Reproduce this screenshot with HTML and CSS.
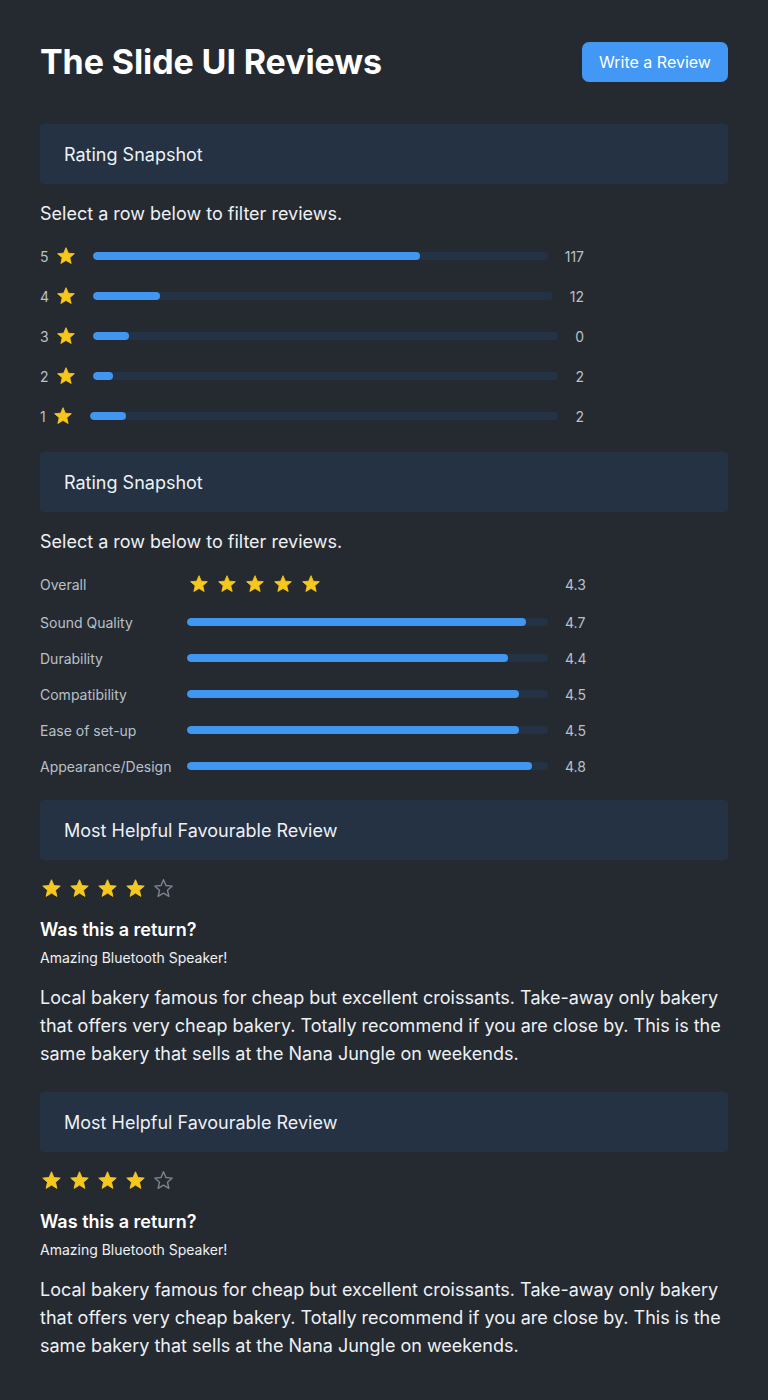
FILE: index.html
```html
<!DOCTYPE html>
<html lang="en">
<head>
<meta charset="utf-8">
<title>The Slide UI Reviews</title>
<link rel="stylesheet" href="styles.css">
</head>
<body>
<svg width="0" height="0" class="defs" aria-hidden="true">
  <defs>
    <symbol id="star" viewBox="0 0 24 24"><path d="M12 17.27L18.18 21l-1.64-7.03L22 9.24l-7.19-.61L12 2 9.19 8.63 2 9.24l5.46 4.730L5.82 21z" stroke-linejoin="round"/></symbol>
  </defs>
</svg>
<main class="page">
  <header class="header">
    <h1 class="title">The Slide UI Reviews</h1>
    <button class="btn">Write a Review</button>
  </header>

  <section class="section">
    <div class="panel">Rating Snapshot</div>
    <p class="intro">Select a row below to filter reviews.</p>
    <div class="dist">
      <div class="drow"><span class="dnum">5</span><svg class="dstar"><use href="#star"/></svg><div class="track"><div class="fill" style="width:72%"></div></div><span class="dcount">117</span></div>
      <div class="drow"><span class="dnum">4</span><svg class="dstar"><use href="#star"/></svg><div class="track"><div class="fill" style="width:14.5%"></div></div><span class="dcount">12</span></div>
      <div class="drow"><span class="dnum">3</span><svg class="dstar"><use href="#star"/></svg><div class="track"><div class="fill" style="width:7.8%"></div></div><span class="dcount">0</span></div>
      <div class="drow"><span class="dnum">2</span><svg class="dstar"><use href="#star"/></svg><div class="track"><div class="fill" style="width:4.4%"></div></div><span class="dcount">2</span></div>
      <div class="drow"><span class="dnum">1</span><svg class="dstar"><use href="#star"/></svg><div class="track"><div class="fill" style="width:7.7%"></div></div><span class="dcount">2</span></div>
    </div>
  </section>

  <section class="section">
    <div class="panel">Rating Snapshot</div>
    <p class="intro">Select a row below to filter reviews.</p>
    <div class="attrs">
      <div class="arow arow-overall"><span class="alabel">Overall</span><div class="astars"><svg class="sstar"><use href="#star"/></svg><svg class="sstar"><use href="#star"/></svg><svg class="sstar"><use href="#star"/></svg><svg class="sstar"><use href="#star"/></svg><svg class="sstar"><use href="#star"/></svg></div><span class="aval">4.3</span></div>
      <div class="arow"><span class="alabel">Sound Quality</span><div class="track"><div class="fill" style="width:94%"></div></div><span class="aval">4.7</span></div>
      <div class="arow"><span class="alabel">Durability</span><div class="track"><div class="fill" style="width:89%"></div></div><span class="aval">4.4</span></div>
      <div class="arow"><span class="alabel">Compatibility</span><div class="track"><div class="fill" style="width:92%"></div></div><span class="aval">4.5</span></div>
      <div class="arow"><span class="alabel">Ease of set-up</span><div class="track"><div class="fill" style="width:92%"></div></div><span class="aval">4.5</span></div>
      <div class="arow"><span class="alabel">Appearance/Design</span><div class="track"><div class="fill" style="width:95.5%"></div></div><span class="aval">4.8</span></div>
    </div>
  </section>

  <section class="section review">
    <div class="panel">Most Helpful Favourable Review</div>
    <div class="rstars"><svg class="rstar"><use href="#star"/></svg><svg class="rstar"><use href="#star"/></svg><svg class="rstar"><use href="#star"/></svg><svg class="rstar"><use href="#star"/></svg><svg class="rstar empty"><use href="#star"/></svg></div>
    <h2 class="rtitle">Was this a return?</h2>
    <p class="rsub">Amazing Bluetooth Speaker!</p>
    <p class="rbody">Local bakery famous for cheap but excellent croissants. Take-away only bakery that offers very cheap bakery. Totally recommend if you are close by. This is the same bakery that sells at the Nana Jungle on weekends.</p>
  </section>

  <section class="section review">
    <div class="panel">Most Helpful Favourable Review</div>
    <div class="rstars"><svg class="rstar"><use href="#star"/></svg><svg class="rstar"><use href="#star"/></svg><svg class="rstar"><use href="#star"/></svg><svg class="rstar"><use href="#star"/></svg><svg class="rstar empty"><use href="#star"/></svg></div>
    <h2 class="rtitle">Was this a return?</h2>
    <p class="rsub">Amazing Bluetooth Speaker!</p>
    <p class="rbody">Local bakery famous for cheap but excellent croissants. Take-away only bakery that offers very cheap bakery. Totally recommend if you are close by. This is the same bakery that sells at the Nana Jungle on weekends.</p>
  </section>
</main>
</body>
</html>
```

FILE: styles.css
```css
* { box-sizing: border-box; }
html, body { margin: 0; padding: 0; }
body {
  background: #252a31;
  color: #f4f6f8;
  font-family: Inter, "Noto Sans", "Liberation Sans", sans-serif;
  min-height: 1400px;
}
.defs { position: absolute; width: 0; height: 0; overflow: hidden; }
.page { padding: 42px 40px 40px; }

.header {
  display: flex;
  justify-content: space-between;
  align-items: center;
  height: 40px;
}
.title {
  margin: 0;
  font-size: 34px;
  font-weight: 700;
  letter-spacing: -0.1px;
  color: #ffffff;
  line-height: 40px;
}
.btn {
  height: 40px;
  width: 146px;
  border: 0;
  border-radius: 7px;
  background: #4298f4;
  color: #ffffff;
  font-family: inherit;
  font-size: 16px;
  font-weight: 400;
  padding: 0;
}

.section { margin-top: 42px; }
.section + .section { margin-top: 16px; }
.review + .review { margin-top: 24px; }

.panel {
  height: 60px;
  display: flex;
  align-items: center;
  padding: 0 24px;
  background: #243244;
  border-radius: 4px;
  font-size: 18px;
  color: #eef1f4;
}
.intro {
  margin: 18px 0 0;
  font-size: 18px;
  line-height: 24px;
  color: #eef1f4;
}

.dist { margin-top: 10px; width: 544px; }
.drow {
  display: flex;
  align-items: center;
  height: 40px;
}
.dnum {
  font-size: 14px;
  color: #b9c0c9;
  flex: none;
}
.dstar {
  margin-left: 7px;
  width: 20px;
  height: 20px;
  flex: none;
  fill: #f8c71b;
  stroke: #f8c71b;
  stroke-width: 1;
}
.track {
  flex: 1;
  height: 8px;
  background: #243245;
  border-radius: 4px;
  overflow: hidden;
}
.fill {
  height: 100%;
  background: #4096f0;
  border-radius: 4px;
}
.drow .track { margin-left: 17px; }
.dcount {
  margin-left: 17px;
  font-size: 14px;
  color: #b9c0c9;
}

.attrs { margin-top: 10px; width: 544px; }
.arow {
  display: flex;
  align-items: center;
  height: 36px;
}
.arow-overall { height: 40px; }
.alabel {
  width: 147px;
  flex: none;
  font-size: 14px;
  color: #b9c0c9;
}
.astars { flex: 1; display: flex; gap: 8px; padding-left: 2px; }
.sstar {
  width: 20px;
  height: 20px;
  fill: #f8c71b;
  stroke: #f8c71b;
  stroke-width: 1;
}
.arow .track { margin-right: 17px; }
.aval {
  font-size: 14px;
  color: #b9c0c9;
  width: 19px;
  text-align: right;
}

.rstars { margin-top: 18px; display: flex; gap: 7px; height: 21px; padding-left: 1px; }
.rstar {
  width: 21px;
  height: 21px;
  fill: #f8c71b;
  stroke: #f8c71b;
  stroke-width: 1;
}
.rstar.empty {
  fill: none;
  stroke: #7b838d;
  stroke-width: 1.6;
}
.rtitle {
  margin: 19px 0 0;
  font-size: 18px;
  font-weight: 600;
  line-height: 24px;
  color: #ffffff;
}
.rsub {
  margin: 6px 0 0;
  font-size: 14px;
  line-height: 20px;
  color: #eef1f4;
}
.rbody {
  margin: 16px 0 0;
  font-size: 18px;
  line-height: 28px;
  color: #eef1f4;
}
```
